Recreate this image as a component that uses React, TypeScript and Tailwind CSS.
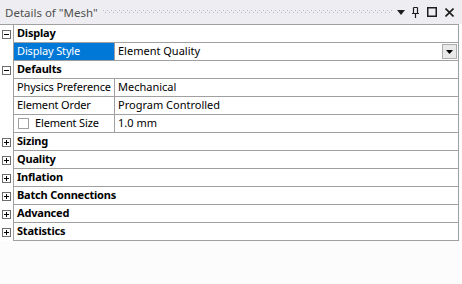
import React from "react";

const F = { fontFamily: '"Segoe UI", "Noto Sans", "Open Sans", sans-serif' };

function Box({ minus }: { minus?: boolean }) {
  return (
    <svg width="9" height="9" viewBox="0 0 9 9" className="block">
      <rect x="0.5" y="0.5" width="8" height="8" fill="#fff" stroke="#6d6d6d" />
      <line x1="2" y1="4.5" x2="7" y2="4.5" stroke="#000" />
      {!minus && <line x1="4.5" y1="2" x2="4.5" y2="7" stroke="#000" />}
    </svg>
  );
}

function Section({ label, minus }: { label: string; minus?: boolean }) {
  return (
    <div className="flex h-[18px]">
      <div className="w-[14px] flex items-center justify-center border-r border-[#a0a0a0]">
        <Box minus={minus} />
      </div>
      <div className="flex-1 flex items-center pl-[3px] font-bold tracking-[-0.2px] whitespace-nowrap border-b border-[#a0a0a0]">{label}</div>
    </div>
  );
}

function Row({
  name,
  value,
  selected,
  dropdown,
  checkbox,
}: {
  name: string;
  value: string;
  selected?: boolean;
  dropdown?: boolean;
  checkbox?: boolean;
}) {
  return (
    <div className="flex h-[18px]">
      <div className="w-[14px] border-r border-[#a0a0a0]" />
      <div
        className={
          "w-[101px] flex items-center pl-[3px] whitespace-nowrap overflow-hidden tracking-[-0.15px] border-b border-r border-[#a0a0a0] " +
          (selected ? "bg-[#0078d7] text-white" : "")
        }
      >
        {checkbox && <div className="shrink-0 w-[11px] h-[11px] border border-[#a0a0a0] bg-white ml-[1px] mr-[6px]" />}
        {name}
      </div>
      <div className="flex-1 flex items-center pl-[3px] whitespace-nowrap border-b border-[#a0a0a0] relative">
        {value}
        {dropdown && (
          <div className="absolute right-[1px] top-[1px] bottom-[1px] w-[15px] bg-[#e9e9e9] border border-[#adadad] flex items-center justify-center">
            <svg width="7" height="4" viewBox="0 0 7 4">
              <path d="M0 0H7L3.5 4Z" fill="#000" />
            </svg>
          </div>
        )}
      </div>
    </div>
  );
}

export default function App() {
  return (
    <div className="w-[462px] h-[284px] bg-[#fcfcfc] text-[11px] text-black overflow-hidden" style={F}>
      <div className="h-[24px] bg-[#eeeef2] flex items-center pl-[5px] pr-[8px] text-[#505050] text-[11.5px]">
        <span className="leading-none pt-[1px] whitespace-nowrap">Details of "Mesh"</span>
        <svg className="flex-1 mx-[5px]" height="4">
          <defs>
            <pattern id="dots" width="4" height="4" patternUnits="userSpaceOnUse">
              <rect x="0" y="0" width="1" height="1" fill="#b8b8c4" />
              <rect x="2" y="2" width="1" height="1" fill="#b8b8c4" />
            </pattern>
          </defs>
          <rect width="100%" height="4" fill="url(#dots)" />
        </svg>
        <svg width="8" height="5" viewBox="0 0 8 5" className="mr-[7px]">
          <path d="M0 0H8L4 5Z" fill="#1e1e1e" />
        </svg>
        <svg width="7" height="11" viewBox="0 0 7 11" className="mr-[8px]">
          <path d="M1.5 0.5V6.5M5.5 0.5V6.5M1.5 0.5H5.5M0 6.5H7M3.5 6.5V11" stroke="#1e1e1e" strokeWidth="1.2" fill="none" />
        </svg>
        <svg width="10" height="10" viewBox="0 0 10 10" className="mr-[8px]">
          <rect x="0.75" y="0.75" width="8.5" height="8.5" stroke="#1e1e1e" strokeWidth="1.5" fill="none" />
        </svg>
        <svg width="9" height="9" viewBox="0 0 9 9">
          <path d="M0.5 0.5L8.5 8.5M8.5 0.5L0.5 8.5" stroke="#1e1e1e" strokeWidth="1.6" />
        </svg>
      </div>
      <div className="flex">
        <div className="w-[459px] bg-white border-t border-r border-[#a0a0a0]">
          <Section label="Display" minus />
          <Row name="Display Style" value="Element Quality" selected dropdown />
          <Section label="Defaults" minus />
          <Row name="Physics Preference" value="Mechanical" />
          <Row name="Element Order" value="Program Controlled" />
          <Row name="Element Size" value="1.0 mm" checkbox />
          <Section label="Sizing" />
          <Section label="Quality" />
          <Section label="Inflation" />
          <Section label="Batch Connections" />
          <Section label="Advanced" />
          <Section label="Statistics" />
        </div>
        <div className="flex-1" />
      </div>
    </div>
  );
}
